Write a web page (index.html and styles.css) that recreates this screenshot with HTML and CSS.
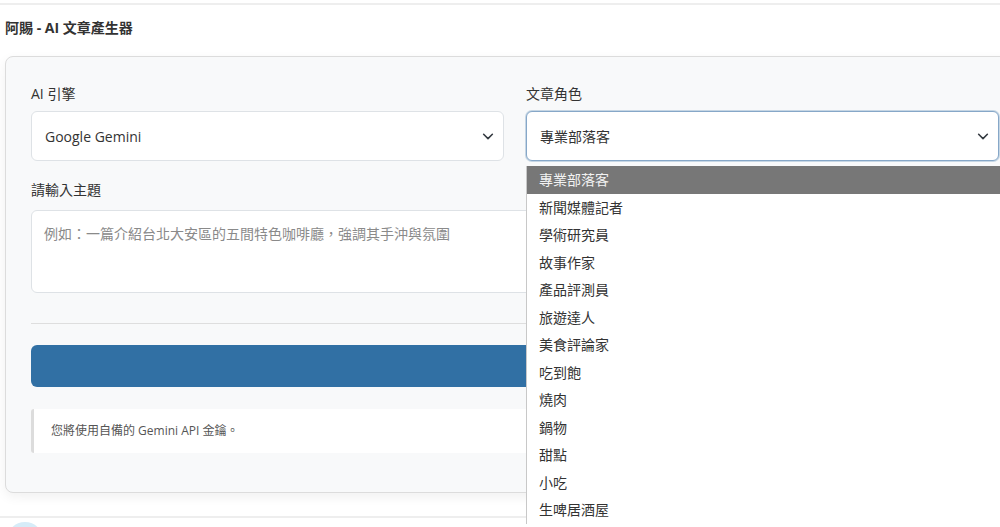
FILE: index.html
```html
<!DOCTYPE html>
<html lang="zh-Hant">
<head>
    <meta charset="UTF-8">
    <meta name="viewport" content="width=device-width, initial-scale=1.0">
    <title>阿賜 - AI 文章產生器</title>
    <link rel="stylesheet" href="styles.css">
</head>
<body>
    <div class="topbar"></div>
    <div class="page">
        <h1 class="title">阿賜 - AI 文章產生器</h1>
        <div class="card">
            <div class="row">
                <div class="field">
                    <label class="label">AI 引擎</label>
                    <div class="select">
                        <span>Google Gemini</span>
                        <svg class="chevron" viewBox="0 0 16 16" width="14" height="14"><path d="M3 6l5 5 5-5" fill="none" stroke="#343a40" stroke-width="1.8" stroke-linecap="round" stroke-linejoin="round"/></svg>
                    </div>
                </div>
                <div class="field role">
                    <label class="label">文章角色</label>
                    <div class="select focus">
                        <span>專業部落客</span>
                        <svg class="chevron" viewBox="0 0 16 16" width="14" height="14"><path d="M3 6l5 5 5-5" fill="none" stroke="#343a40" stroke-width="1.8" stroke-linecap="round" stroke-linejoin="round"/></svg>
                    </div>
                    <ul class="options">
                        <li class="selected">專業部落客</li>
                        <li>新聞媒體記者</li>
                        <li>學術研究員</li>
                        <li>故事作家</li>
                        <li>產品評測員</li>
                        <li>旅遊達人</li>
                        <li>美食評論家</li>
                        <li>吃到飽</li>
                        <li>燒肉</li>
                        <li>鍋物</li>
                        <li>甜點</li>
                        <li>小吃</li>
                        <li>生啤居酒屋</li>
                    </ul>
                </div>
            </div>
            <label class="label topic-label">請輸入主題</label>
            <div class="textarea">例如：一篇介紹台北大安區的五間特色咖啡廳，強調其手沖與氛圍</div>
            <hr class="divider">
            <button class="btn-generate"></button>
            <div class="notice">您將使用自備的 Gemini API 金鑰。</div>
        </div>
    </div>
    <div class="footer">
        <div class="avatar"></div>
    </div>
</body>
</html>
```

FILE: styles.css
```css
html, body {
    margin: 0;
    padding: 0;
    overflow: hidden;
}
body {
    font-family: "Open Sans", "Noto Sans CJK TC", sans-serif;
    font-size: 14px;
    color: #333;
    background-color: #fff;
    width: 1000px;
    height: 527px;
}
.topbar {
    height: 3px;
    border-bottom: 2px solid #eeeeee;
}
.page {
    padding: 0 0 0 5px;
    width: 1021px;
}
.title {
    margin: 0;
    height: 51px;
    line-height: 46px;
    font-size: 14px;
    font-weight: 700;
    color: #333;
}
.card {
    background-color: #f8f9fa;
    border: 1px solid #dcdcdc;
    border-radius: 8px;
    padding: 27px 26px 39px 25px;
    box-shadow: 0 4px 12px rgba(0,0,0,0.06);
}
.row {
    display: grid;
    grid-template-columns: 1fr 1fr;
    gap: 22px;
}
.field {
    position: relative;
}
.label {
    display: block;
    line-height: 20px;
    margin-bottom: 7px;
    color: #333;
}
.select {
    height: 50px;
    box-sizing: border-box;
    border: 1px solid #dee2e6;
    border-radius: 6px;
    background-color: #fff;
    display: flex;
    align-items: center;
    justify-content: space-between;
    padding: 0 8px 0 13px;
}
.select.focus {
    border-color: #86a7c8;
    box-shadow: 0 0 0 1px rgba(49,112,165,0.25);
}
.options {
    position: absolute;
    top: 82px;
    left: 0;
    right: -2px;
    margin: 0;
    padding: 0;
    list-style: none;
    background-color: #fff;
    border-left: 1px solid #c8c8c8;
    z-index: 5;
}
.options li {
    height: 27.5px;
    line-height: 27.5px;
    padding-left: 12px;
    color: #333;
}
.options li.selected {
    background-color: #777777;
    color: #f2f2f2;
}
.topic-label {
    margin-top: 19px;
    margin-bottom: 10px;
}
.textarea {
    height: 83px;
    box-sizing: border-box;
    border: 1px solid #dee2e6;
    border-radius: 6px;
    background-color: #fff;
    padding: 12px 12px;
    color: #8a8a8a;
}
.divider {
    border: 0;
    border-top: 1px solid #dedede;
    margin: 30px 0 21px;
}
.btn-generate {
    display: block;
    width: 100%;
    height: 42px;
    border: 0;
    border-radius: 6px;
    background-color: #3170a4;
    margin-bottom: 22px;
}
.notice {
    height: 44px;
    line-height: 44px;
    box-sizing: border-box;
    background-color: #fff;
    border-left: 3px solid #dcdcdc;
    border-radius: 3px 0 0 3px;
    padding-left: 17px;
    font-size: 12px;
    color: #555;
}
.footer {
    margin-top: 23px;
    border-top: 2px solid #eeeeee;
    padding: 4px 0 0 7px;
}
.avatar {
    width: 36px;
    height: 36px;
    border-radius: 50%;
    background-color: #d6ecf8;
}
```
